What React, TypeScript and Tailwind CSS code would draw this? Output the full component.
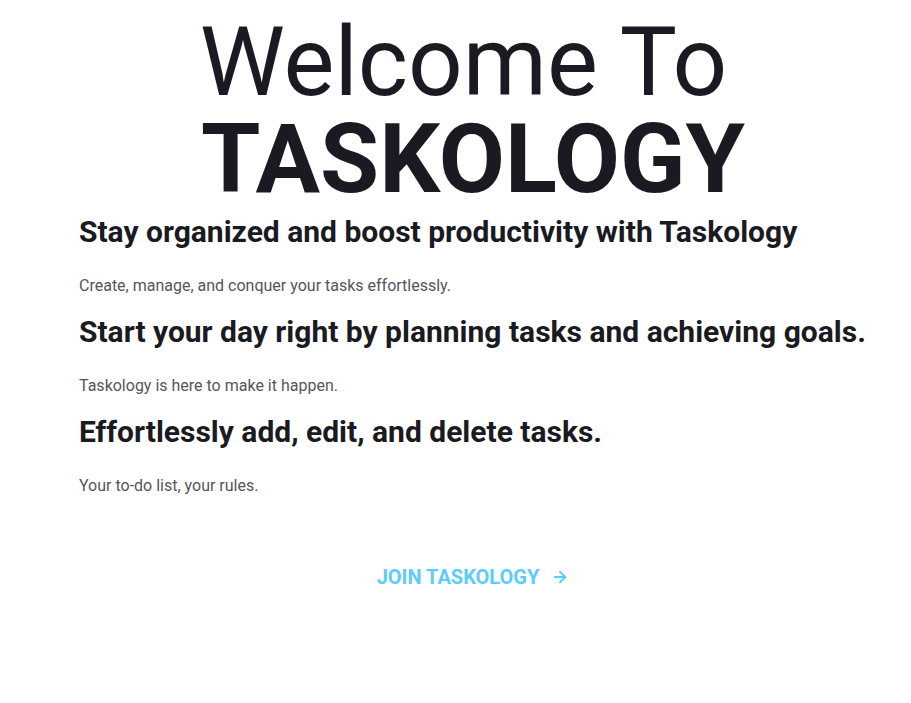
import { ArrowRight } from "lucide-react";

const sections = [
  {
    title: "Stay organized and boost productivity with Taskology",
    text: "Create, manage, and conquer your tasks effortlessly.",
  },
  {
    title: "Start your day right by planning tasks and achieving goals.",
    text: "Taskology is here to make it happen.",
  },
  {
    title: "Effortlessly add, edit, and delete tasks.",
    text: "Your to-do list, your rules.",
  },
];

export default function App() {
  return (
    <div className="min-h-screen bg-white font-['Roboto',sans-serif] text-[#1a1a22]">
      <div className="pl-[79px] pr-[44px] pt-[14px]">
        <h1 className="text-center text-[96px] leading-[97px] font-normal">
          <span className="pr-[19px]">Welcome To</span>
          <br />
          <span className="font-bold">TASKOLOGY</span>
        </h1>
        <div className="mt-[4px] flex flex-col">
          {sections.map((s) => (
            <div key={s.title} className="h-[100px]">
              <h2 className="text-[30px] leading-[40px] font-bold">{s.title}</h2>
              <p className="mt-[22px] text-base leading-6 text-[#55555e]">{s.text}</p>
            </div>
          ))}
        </div>
        <div className="mt-[51px] flex justify-center">
          <button className="flex items-center gap-[12px] text-xl font-bold uppercase text-[#5ccdfa]">
            <span>Join Taskology</span>
            <ArrowRight size={18} strokeWidth={2.5} />
          </button>
        </div>
      </div>
    </div>
  );
}
